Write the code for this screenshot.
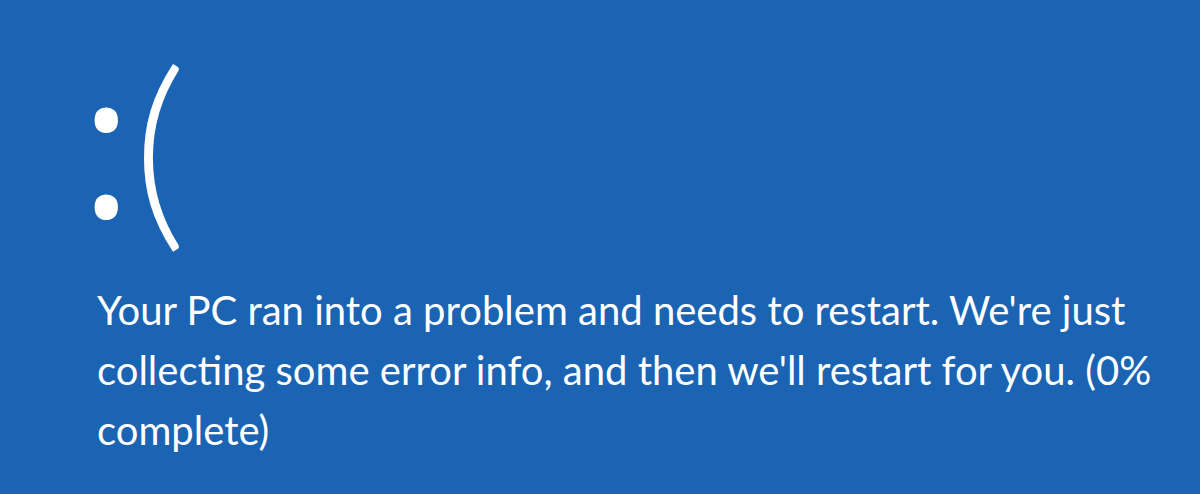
export default function App() {
  return (
    <div className="w-[1200px] h-[494px] overflow-hidden bg-[#1a64b3] text-white font-['Open_Sans','Noto_Sans',sans-serif]">
      <div className="pl-[80px] pt-[4px]">
        <div className="text-[0px] leading-[0] whitespace-nowrap">
          <span className="text-[200px] leading-[1.362] font-medium">:</span>
          <span className="text-[210px] leading-[1.2] align-[-7px] font-light font-['Lato','Open_Sans',sans-serif]">(</span>
        </div>
        <div className="mt-[4px] pl-[17px] text-[40px] leading-[60px] font-normal font-['Lato','Open_Sans',sans-serif]">
          <div className="whitespace-nowrap">Your PC ran into a problem and needs to restart. We're just</div>
          <div className="whitespace-nowrap">collecting some error info, and then we'll restart for you. (0%</div>
          <div className="whitespace-nowrap">complete)</div>
        </div>
      </div>
    </div>
  )
}
